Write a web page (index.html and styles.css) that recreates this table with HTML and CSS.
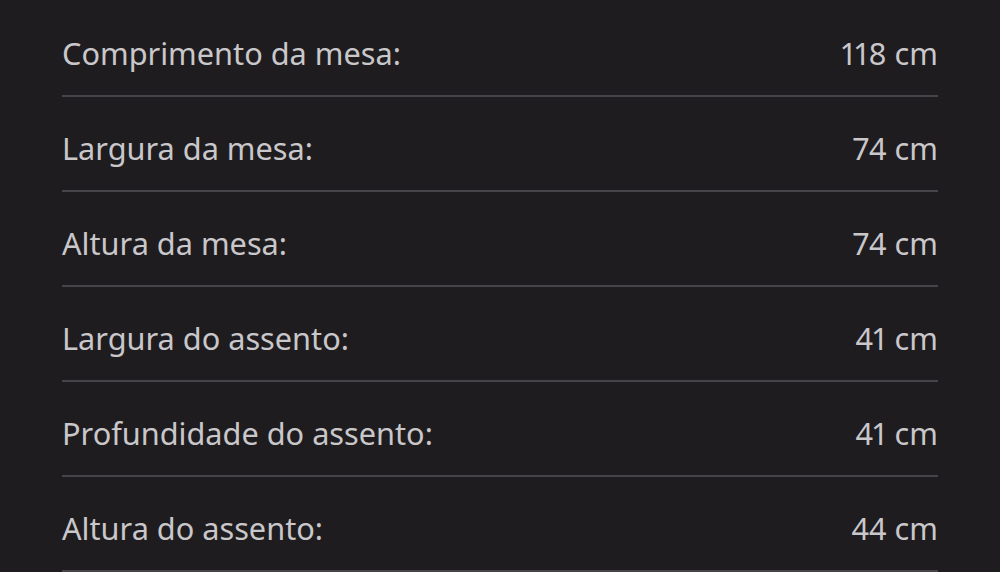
FILE: index.html
```html
<!DOCTYPE html>
<html lang="pt">
<head>
<meta charset="utf-8">
<link rel="stylesheet" href="styles.css">
</head>
<body>
<div class="specs">
  <div class="row"><span class="label">Comprimento da mesa:</span><span class="value">118 cm</span></div>
  <div class="row"><span class="label">Largura da mesa:</span><span class="value">74 cm</span></div>
  <div class="row"><span class="label">Altura da mesa:</span><span class="value">74 cm</span></div>
  <div class="row"><span class="label">Largura do assento:</span><span class="value">41 cm</span></div>
  <div class="row"><span class="label">Profundidade do assento:</span><span class="value">41 cm</span></div>
  <div class="row"><span class="label">Altura do assento:</span><span class="value">44 cm</span></div>
</div>
</body>
</html>
```
FILE: styles.css
```css
html, body {
  margin: 0;
  padding: 0;
  background: #1e1c1f;
  height: 100%;
  overflow: hidden;
}
.specs {
  padding: 2px 62px 0;
  font-family: "Noto Sans", "Open Sans", sans-serif;
  font-size: 30.7px;
  line-height: 42px;
  color: #c9c7ca;
  font-variant-numeric: proportional-nums;
}
.row {
  box-sizing: border-box;
  display: flex;
  justify-content: space-between;
  align-items: flex-start;
  height: 95px;
  padding-top: 30px;
  border-bottom: 2px solid #464448;
}
```
